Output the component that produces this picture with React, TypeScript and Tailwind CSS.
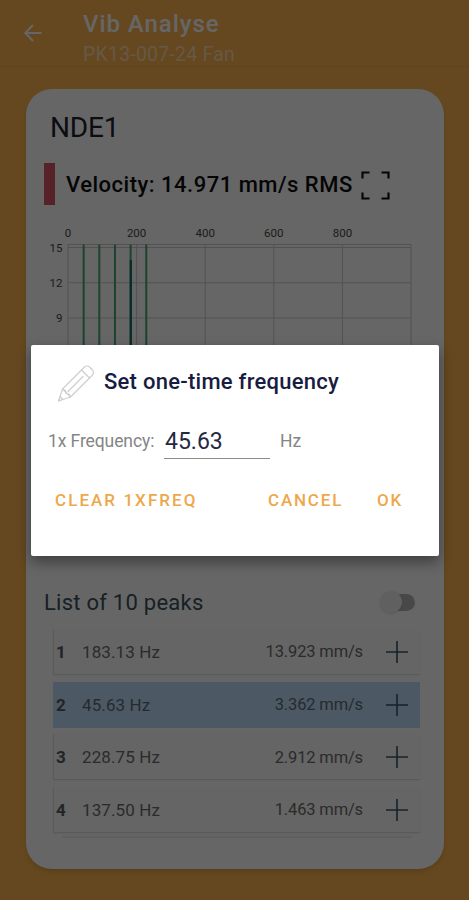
import { useState } from "react";

type Peak = { id: number; freq: string; value: string };

const PEAKS: Peak[] = [
  { id: 1, freq: "183.13 Hz", value: "13.923 mm/s" },
  { id: 2, freq: "45.63 Hz", value: "3.362 mm/s" },
  { id: 3, freq: "228.75 Hz", value: "2.912 mm/s" },
  { id: 4, freq: "137.50 Hz", value: "1.463 mm/s" },
];

const X_TICKS = [0, 200, 400, 600, 800];
const Y_TICKS = [15, 12, 9, 6, 3, 0];
const HARMONICS = [45.63, 91.26, 136.89, 182.52, 228.15];

const xPos = (hz: number) => 24 + hz * 0.343;
const yPos = (v: number) => 25.5 + (15 - v) * 11.75;

function SpectrumChart() {
  return (
    <svg className="block h-[210px] w-[376px]" viewBox="0 0 376 210" fontFamily="Roboto, sans-serif" fontSize="11.5">
      {X_TICKS.map((t) => (
        <text key={t} x={xPos(t)} y="15" textAnchor="middle" fill="#484848">
          {t}
        </text>
      ))}
      {Y_TICKS.map((t) => (
        <text key={t} x="18.5" y={yPos(t) + 4} textAnchor="end" fill="#484848">
          {t}
        </text>
      ))}
      <g stroke="#cdcdcd" strokeWidth="1">
        <line x1="24" x2="367" y1="22.5" y2="22.5" />
        {Y_TICKS.map((t) => (
          <line key={t} x1="24" x2="367" y1={yPos(t)} y2={yPos(t)} />
        ))}
        {[...X_TICKS, 1000].map((t) => (
          <line key={t} x1={xPos(t)} x2={xPos(t)} y1="22" y2="202" />
        ))}
      </g>
      {HARMONICS.map((hz) => (
        <line key={hz} x1={xPos(hz)} x2={xPos(hz)} y1="22.5" y2="202" stroke="#45a873" strokeWidth="2" />
      ))}
      <line x1={xPos(183.13)} x2={xPos(183.13)} y1="38" y2="202" stroke="#17695c" strokeWidth="2.2" />
    </svg>
  );
}

function PencilIcon() {
  return (
    <svg className="h-[40px] w-[38px]" viewBox="0 0 38 40" fill="none" stroke="#cfcfcf" strokeWidth="1.2" strokeLinejoin="round" strokeLinecap="round">
      <path d="M1.500 37 5.500 25 27.500 3Q30 1 32.500 3L35.500 6Q37.500 8.500 35.500 11L13.500 33Z" />
      <path d="M5.500 25 13.500 33M24.500 6 32.500 14M11 27.500 26 12.500M1.500 37 3 32.500 6 35.300Z" />
      <path d="M5.500 25 8.500 26.500 9 29.500 12 30 13.500 33" />
    </svg>
  );
}

function PeakRow({ peak, selected }: { peak: Peak; selected: boolean }) {
  return (
    <li
      className={
        selected
          ? "flex h-[46px] items-center bg-[#bfdffa] pr-[12px] pl-[3px] text-[#606a75]"
          : "flex h-[46px] items-center border-b border-l border-[#e0e0e0] bg-[#fcfcfc] pr-[12px] pl-[2px] text-[#6c6c6c] shadow-xs"
      }
    >
      <span className="w-[26px] pt-[2px] text-[17px] font-bold text-[#555a62]">{peak.id}</span>
      <span className="pt-[2px] text-[17px] tracking-[0.1px]">{peak.freq}</span>
      <span className="mr-[23px] ml-auto pt-[2px] text-[16.5px] tracking-[-0.15px]">{peak.value}</span>
      <svg className="h-[22px] w-[22px]" viewBox="0 0 22 22" stroke="#34566a" strokeWidth="1.6">
        <path d="M11 0v22M0 11h22" />
      </svg>
    </li>
  );
}

export default function App() {
  const [frequency, setFrequency] = useState("45.63");

  return (
    <div className="relative h-[900px] w-[469px] overflow-hidden bg-[#fcb44e] font-[Roboto,sans-serif] whitespace-nowrap">
      <header className="flex h-[67px] items-start border-b border-[#f2a548] pl-[24px]">
        <svg className="mt-[24px] h-[18px] w-[18px]" viewBox="0 0 18 18" fill="none" stroke="#fff" strokeWidth="2">
          <path d="M17.500 9H1.500M9 1 1.300 9 9 17" />
        </svg>
        <div className="ml-[41px] pt-[10px]">
          <h1 className="text-[24px] leading-[28px] font-medium tracking-[0.95px] text-white">Vib Analyse</h1>
          <p className="text-[19.5px] leading-[33px] tracking-[0.22px] text-[#ffdcae]">PK13-007-24 Fan</p>
        </div>
      </header>

      <main className="mt-[22px] ml-[26px] h-[780px] w-[418px] rounded-[26px] bg-white pt-[20px] pr-[24px] pl-[18px] shadow-md">
        <h2 className="pt-px pl-[6px] text-[28px] leading-[36px] tracking-[-0.2px] text-[#1c2130]">NDE1</h2>
        <div className="mt-[17px] flex h-[42px] items-center">
          <span className="h-[42px] w-[11px] bg-[#d85362]" />
          <p className="ml-[11px] pt-px text-[22px] font-medium tracking-[0.5px] text-[#0d0d0d]">Velocity: 14.971 mm/s RMS</p>
          <svg className="mt-[3px] ml-[8px] h-[29px] w-[29px]" viewBox="0 0 29 29" fill="none" stroke="#111" strokeWidth="2.2">
            <path d="M1.500 7.500V1.500H8.500M20.500 1.500h7V7.500M27.500 21.500v6H20.500M8.500 27.500H1.500V21.500" />
          </svg>
        </div>
        <div className="mt-[17px] h-[360px]">
          <SpectrumChart />
        </div>
        <div className="flex h-[40px] items-center justify-between pr-[5px]">
          <h3 className="pt-px text-[22px] tracking-[0.25px] text-[#39525e]">List of 10 peaks</h3>
          <span className="flex h-[17px] w-[31px] items-center rounded-full bg-[#b4b4b4]">
            <span className="-ml-[4px] h-[22px] w-[22px] shrink-0 rounded-full bg-[#f0f0f0] shadow-sm" />
          </span>
        </div>
        <ul className="mt-[7px] ml-[9px] flex w-[367px] flex-col gap-[6.7px]">
          {PEAKS.map((peak) => (
            <PeakRow key={peak.id} peak={peak} selected={peak.id === 2} />
          ))}
        </ul>
        <div className="mt-[3px] ml-[18px] h-[2px] w-[350px] bg-[#ebf0ef]" />
      </main>

      <div className="absolute inset-0 bg-black/60">
        <section
          role="dialog"
          className="mt-[345px] ml-[31px] flex h-[211px] w-[408px] flex-col rounded-[2px] bg-white shadow-[0_6px_14px_rgba(0,0,0,0.4)]"
        >
          <div className="flex items-start pt-[19px] pl-[26px]">
            <PencilIcon />
            <h2 className="ml-[9px] pt-[4px] text-[22px] leading-[28px] font-medium tracking-[0.26px] text-[#171c40]">
              Set one-time frequency
            </h2>
          </div>
          <div className="mt-[20px] flex h-[34px] items-center pl-[17px] text-[17.5px] text-[#858585]">
            <label htmlFor="freq" className="w-[116px] tracking-[-0.1px]">1x Frequency:</label>
            <input
              id="freq"
              value={frequency}
              onChange={(e) => setFrequency(e.target.value)}
              className="mt-px h-[34px] w-[106px] border-b-[1.5px] border-[#8c8c8c] bg-transparent pt-[2px] pl-px text-[23px] text-[#242942] outline-none"
            />
            <span className="ml-[10px]">Hz</span>
          </div>
          <div className="mt-[30px] flex pl-[24px] text-[17px] leading-[24px] font-medium tracking-[1.8px] text-[#eda84c]">
            <button className="w-[213px] text-left tracking-[2.05px]">CLEAR 1XFREQ</button>
            <button className="w-[109px] text-left">CANCEL</button>
            <button>OK</button>
          </div>
        </section>
      </div>
    </div>
  );
}
